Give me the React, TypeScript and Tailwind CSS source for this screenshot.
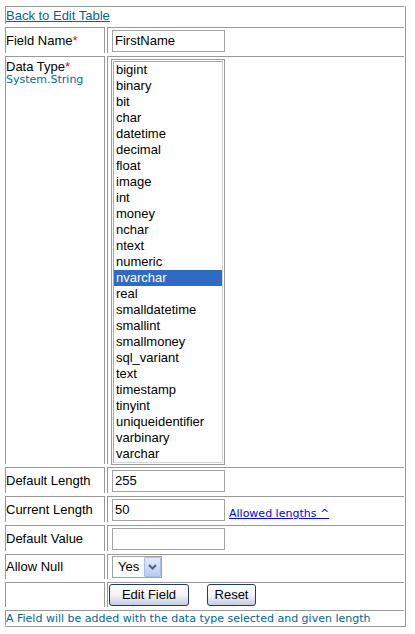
const items = [
  "bigint",
  "binary",
  "bit",
  "char",
  "datetime",
  "decimal",
  "float",
  "image",
  "int",
  "money",
  "nchar",
  "ntext",
  "numeric",
  "nvarchar",
  "real",
  "smalldatetime",
  "smallint",
  "smallmoney",
  "sql_variant",
  "text",
  "timestamp",
  "tinyint",
  "uniqueidentifier",
  "varbinary",
  "varchar",
];

function TextBox({ value }: { value?: string }) {
  return (
    <div className="h-[22px] w-[113px] border border-[#a3a3a3] bg-white pl-[2px] leading-[20px]">
      {value}
    </div>
  );
}

function Label({ children, pt = "pt-[5px]" }: { children?: React.ReactNode; pt?: string }) {
  return (
    <div className={`w-[100px] shrink-0 border-t border-r border-l border-[#999999] leading-[16px] ${pt}`}>
      {children}
    </div>
  );
}

function Star() {
  return <span className="text-[#ff0000]">*</span>;
}

export default function App() {
  return (
    <div className="min-h-[634px] bg-white pt-[6px] pl-[5px] font-['Liberation_Sans',Arial,sans-serif] text-[13px] text-black">
      <div className="flex w-[401px] flex-col gap-[3px] border-r border-b border-[#999999] pr-[1px] pb-[1px]">
        {/* Back link */}
        <div className="h-[18px] border-t border-l border-[#999999] pt-[1px] leading-[16px]">
          <span className="text-[#006699] underline">Back to Edit Table</span>
        </div>

        {/* Field Name */}
        <div className="flex h-[26px] gap-[2px]">
          <Label>
            Field Name<Star />
          </Label>
          <div className="flex-1 border-t border-l border-[#999999] pt-[2px] pl-[4px]">
            <TextBox value="FirstName" />
          </div>
        </div>

        {/* Data Type */}
        <div className="flex h-[408px] gap-[2px]">
          <div className="w-[100px] shrink-0 border-t border-r border-l border-[#999999] pt-[2px]">
            <div className="leading-[15px]">
              Data Type<Star />
            </div>
            <div className="font-['DejaVu_Sans',Verdana,sans-serif] text-[11px] leading-[11px] text-[#006699]">
              System.String
            </div>
          </div>
          <div className="flex-1 border-t border-l border-[#999999] pt-[2px] pl-[3px]">
            <div className="w-[114px] border border-[#9c9c9c] bg-white p-[1px]">
              <div className="border border-t-[#a8a8a8] border-l-[#a8a8a8] border-r-[#d2d2d2] border-b-[#d2d2d2]">
                {items.map((it) => (
                  <div
                    key={it}
                    className={`h-[16px] pl-[2px] leading-[16px] ${
                      it === "nvarchar" ? "bg-[#316ac5] text-white" : "text-black"
                    }`}
                  >
                    {it}
                  </div>
                ))}
              </div>
            </div>
          </div>
        </div>

        {/* Default Length */}
        <div className="flex h-[26px] gap-[2px]">
          <Label>Default Length</Label>
          <div className="flex-1 border-t border-l border-[#999999] pt-[2px] pl-[4px]">
            <TextBox value="255" />
          </div>
        </div>

        {/* Current Length */}
        <div className="flex h-[26px] gap-[2px]">
          <Label>Current Length</Label>
          <div className="flex flex-1 items-start border-t border-l border-[#999999] pt-[2px] pl-[4px]">
            <TextBox value="50" />
            <span className="mt-[8px] ml-[4px] font-['DejaVu_Sans',Verdana,sans-serif] text-[11px] leading-[13px] text-[#0000ff] underline">
              Allowed lengths ^
            </span>
          </div>
        </div>

        {/* Default Value */}
        <div className="flex h-[26px] gap-[2px]">
          <Label>Default Value</Label>
          <div className="flex-1 border-t border-l border-[#999999] pt-[2px] pl-[4px]">
            <TextBox />
          </div>
        </div>

        {/* Allow Null */}
        <div className="flex h-[25px] gap-[2px]">
          <Label pt="pt-[4px]">Allow Null</Label>
          <div className="flex-1 border-t border-l border-[#999999] pt-[1px] pl-[4px]">
            <div className="flex h-[22px] w-[50px] border border-[#a3a3a3] bg-white">
              <div className="flex-1 pl-[5px] leading-[20px]">Yes</div>
              <div className="flex h-[20px] w-[17px] items-center justify-center rounded-[1px] border border-[#a9bce4] bg-linear-to-b from-[#e3ebfb] to-[#b9caf0]">
                <svg width="9" height="6" viewBox="0 0 9 6">
                  <path d="M1 1 L4.5 4.5 L8 1" fill="none" stroke="#4d6185" strokeWidth="2" />
                </svg>
              </div>
            </div>
          </div>
        </div>

        {/* Buttons */}
        <div className="flex h-[25px] gap-[2px]">
          <Label />
          <div className="flex flex-1 items-start gap-[18px] border-t border-l border-[#999999] pt-[1px] pl-[1px]">
            <div className="flex h-[22px] w-[80px] items-center justify-center rounded-[3px] border border-[#1f3b6e] bg-linear-to-b from-white via-[#f2f4f9] to-[#c3cce0]">
              Edit Field
            </div>
            <div className="flex h-[22px] w-[49px] items-center justify-center rounded-[3px] border border-[#1f3b6e] bg-linear-to-b from-white via-[#f2f4f9] to-[#c3cce0]">
              Reset
            </div>
          </div>
        </div>

        {/* Footer */}
        <div className="h-[15px] border-t border-l border-[#999999] pt-[1px] font-['DejaVu_Sans',Verdana,sans-serif] text-[11px] leading-[13px] text-[#006699]">
          A Field will be added with the data type selected and given length
        </div>
      </div>
    </div>
  );
}
